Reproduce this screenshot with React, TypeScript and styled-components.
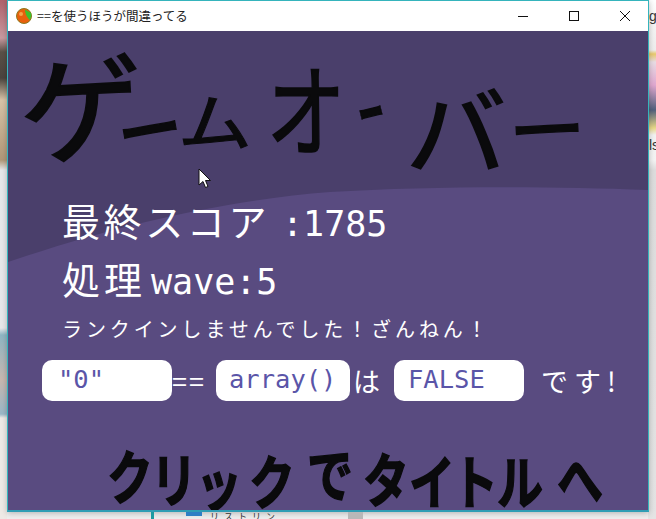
import React from "react";
import styled, { createGlobalStyle } from "styled-components";

const Global = createGlobalStyle`
  html, body { margin: 0; padding: 0; background: #eeeeee; }
  #root { width: 656px; height: 519px; overflow: hidden; }
`;

const CJK = `"Noto Sans CJK JP", "Noto Sans", sans-serif`;
const MONO = `"DejaVu Sans Mono", monospace`;

const Desktop = styled.div`
  position: relative;
  width: 656px;
  height: 519px;
  overflow: hidden;
  display: flex;
  flex-direction: column;
  background-color: #eeeeee;
  background-image:
    linear-gradient(180deg, #b0626c 0, #c99aa0 38px, #5a5148 52px, #4a443e 78px, #d8c4a8 100px, #b09878 160px, #e6e8ea 170px, #e8e8ea 328px, #8fb6c4 335px, #c8b8b0 380px, #9ab8c8 414px, #eeeae6 418px),
    linear-gradient(180deg, #ffffff 0, #f4f4f4 26px, #eeeeee 50px, #e9c96c 54px, #e8dce4 62px, #e0a8d0 85px, #50607c 110px, #e8d888 128px, #f2f2f2 135px, #f4f4f4 160px, #dddddd 170px, #e4e4e4 519px);
  background-size: 7px 519px, 8px 519px;
  background-position: left top, right top;
  background-repeat: no-repeat;
`;

const Window = styled.main`
  width: 642px;
  height: 512px;
  margin-left: 7px;
  flex: none;
  box-sizing: border-box;
  display: flex;
  flex-direction: column;
  border: 1px solid #35b4bc;
  border-bottom: 2px solid #2f9db4;
  box-shadow: 0 1px 6px rgba(0, 0, 0, 0.25);
`;

const TitleBar = styled.header`
  height: 30px;
  flex: none;
  display: flex;
  align-items: center;
  padding-left: 8px;
  background: #ffffff;
  font: 12.5px/1 ${CJK};
  color: #222222;
  gap: 5px;
`;

const TitleText = styled.span`
  flex: 1;
`;

const Control = styled.div`
  width: 46px;
  height: 30px;
  display: flex;
  align-items: center;
  justify-content: center;
`;

const Game = styled.section`
  position: relative;
  flex: 1;
  min-height: 0;
  overflow: hidden;
  background: #594b80;
  display: flex;
  flex-direction: column;
  color: #ffffff;
  font-family: ${CJK};
`;

const Backdrop = styled.svg`
  position: absolute;
  inset: 0;
  width: 100%;
  height: 100%;
`;

const Cursor = styled.svg`
  position: absolute;
  left: 190px;
  top: 137px;
`;

const Scribble = styled.div<{ $size: number; $height: number; $stroke: number; $weight: number }>`
  position: relative;
  display: flex;
  height: ${(p) => p.$height}px;
  font-size: ${(p) => p.$size}px;
  font-weight: ${(p) => p.$weight};
  line-height: 1;
  color: #0a0a0c;
  -webkit-text-stroke: ${(p) => p.$stroke}px #0a0a0c;
`;

const Glyph = styled.span<{ $w: number; $top: number; $left?: number; $rot?: number; $sx?: number; $sy?: number }>`
  display: flex;
  justify-content: center;
  flex: none;
  align-self: flex-start;
  width: ${(p) => p.$w}px;
  margin-top: ${(p) => p.$top}px;
  margin-left: ${(p) => p.$left ?? 0}px;
  white-space: nowrap;
  transform: rotate(${(p) => p.$rot ?? 0}deg) scale(${(p) => p.$sx ?? 1}, ${(p) => p.$sy ?? 1});
`;

const TitleRow = styled(Scribble)`
  padding-left: 8px;
`;

const FooterRow = styled(Scribble)`
  padding-left: 98px;
  margin-top: 40px;
`;

const Line = styled.div<{ $size: number; $space: number; $height: number; $top: number; $weight: number }>`
  position: relative;
  padding-left: 54px;
  margin-top: ${(p) => p.$top}px;
  font-size: ${(p) => p.$size}px;
  letter-spacing: ${(p) => p.$space}px;
  line-height: ${(p) => p.$height}px;
  height: ${(p) => p.$height}px;
  font-weight: ${(p) => p.$weight};
  white-space: nowrap;
`;

const MonoRun = styled.span<{ $left: number }>`
  font-family: ${MONO};
  font-size: 35px;
  letter-spacing: 0;
  margin-left: ${(p) => p.$left}px;
`;

const Sentence = styled.div`
  position: relative;
  display: flex;
  align-items: center;
  height: 42px;
  margin-top: 16px;
  padding-left: 34px;
  font-size: 27px;
  font-weight: 400;
  white-space: nowrap;
`;

const Tag = styled.span<{ $w: number; $pad: number }>`
  box-sizing: border-box;
  width: ${(p) => p.$w}px;
  height: 41px;
  flex: none;
  display: flex;
  align-items: center;
  padding-left: ${(p) => p.$pad}px;
  background: #ffffff;
  border-radius: 10px;
  color: #5a55a8;
  font: 25.5px/1 ${MONO};
`;

const Word = styled.span<{ $w: number; $left?: number; $space?: number }>`
  flex: none;
  width: ${(p) => p.$w}px;
  margin-left: ${(p) => p.$left ?? 0}px;
  letter-spacing: ${(p) => p.$space ?? 0}px;
`;

const BottomStrip = styled.div`
  flex: 1;
  position: relative;
  display: flex;
  align-items: flex-start;
  overflow: hidden;
  padding-left: 151px;
`;

const TealBar = styled.span`
  width: 3px;
  height: 7px;
  background: #1d9aa0;
  flex: none;
`;

const Pane = styled.div`
  display: flex;
  align-items: flex-start;
  gap: 8px;
  height: 7px;
  margin-left: 32px;
  width: 162px;
  font: 9px/1 ${CJK};
  color: #333333;
`;

const Chip = styled.span`
  width: 16px;
  height: 4px;
  background: #2f7fc4;
  flex: none;
`;

const PaneText = styled.span`
  letter-spacing: 5px;
  white-space: nowrap;
`;

const Scrollbar = styled.span`
  width: 15px;
  height: 7px;
  background: #b8b8b8;
  flex: none;
`;

const Peek = styled.span<{ $top: number }>`
  position: absolute;
  left: 649px;
  top: ${(p) => p.$top}px;
  font: 14px/1 "Liberation Sans", sans-serif;
  color: #333333;
`;

const title = [
  { c: "ゲ", w: 102, left: 14, top: 40, rot: -3, sx: 2.0, sy: 1.9 },
  { c: "ー", w: 62, left: -14, top: 63, rot: -10, sx: 1.06, sy: 1.42 },
  { c: "ム", w: 70, top: 57, sx: 1.2, sy: 1.0 },
  { c: "オ", w: 72, left: 20, top: 43, sx: 1.28, sy: 1.63 },
  { c: "ー", w: 48, left: 4, top: 46, rot: -14, sx: 0.43, sy: 1.42 },
  { c: "バ", w: 88, left: 18, top: 64, sx: 1.63, sy: 1.56 },
  { c: "ー", w: 70, left: 12, top: 63, rot: -3, sx: 1.25, sy: 1.28 },
];

const footer = [
  { c: "ク", w: 48, top: 13 },
  { c: "リ", w: 40, top: 16 },
  { c: "ッ", w: 50, top: 20 },
  { c: "ク", w: 56, top: 18 },
  { c: "で", w: 60, top: 11 },
  { c: "タ", w: 52, top: 16 },
  { c: "イ", w: 40, top: 18 },
  { c: "ト", w: 46, top: 18 },
  { c: "ル", w: 44, top: 18 },
  { c: "へ", w: 76, top: 16 },
];

const notice = "ランクインしませんでした\uFF01ざんねん\uFF01";

export default function App() {
  return (
    <Desktop>
      <Global />
      <Window>
        <TitleBar>
          <svg width="16" height="16" viewBox="0 0 16 16">
            <circle cx="8" cy="8" r="7.5" fill="#e8600c" stroke="#8a7a20" strokeWidth="1" />
            <path d="M9 1.5 L15 5 Q16 9 13.5 12 Q9 7 9 1.5Z" fill="#3fc02c" />
            <circle cx="5" cy="6" r="2" fill="#f5a24a" />
          </svg>
          <TitleText>==を使うほうが間違ってる</TitleText>
          <Control>
            <svg width="12" height="12" viewBox="0 0 12 12"><path d="M1 6.5H11" stroke="#111" strokeWidth="1" /></svg>
          </Control>
          <Control>
            <svg width="12" height="12" viewBox="0 0 12 12"><rect x="1.5" y="1.5" width="9" height="9" fill="none" stroke="#111" /></svg>
          </Control>
          <Control>
            <svg width="12" height="12" viewBox="0 0 12 12"><path d="M1 1L11 11M11 1L1 11" stroke="#111" strokeWidth="1" /></svg>
          </Control>
        </TitleBar>
        <Game>
          <Backdrop viewBox="0 0 640 479" preserveAspectRatio="none" aria-hidden="true">
            <path d="M0 0H640V159C540 155 420 155 322 161C230 168 120 190 0 231Z" fill="#4a3f6b" />
          </Backdrop>
          <Cursor width="14" height="22" viewBox="0 0 14 22" aria-hidden="true">
            <path d="M1 1V17L5 13.5L7.5 19.5L10 18.5L7.5 12.5H12.5Z" fill="#fff" stroke="#111" strokeWidth="1" />
          </Cursor>
          <TitleRow $size={62} $height={158} $stroke={1} $weight={400}>
            {title.map((g, i) => (
              <Glyph key={i} $w={g.w} $left={g.left} $top={g.top} $rot={g.rot} $sx={g.sx} $sy={g.sy}>{g.c}</Glyph>
            ))}
          </TitleRow>
          <Line $size={38} $space={3.6} $height={44} $top={9} $weight={400}>最終スコア<MonoRun $left={12}>:1785</MonoRun></Line>
          <Line $size={38} $space={4} $height={44} $top={14} $weight={400}>処理<MonoRun $left={5}>wave:5</MonoRun></Line>
          <Line $size={20} $space={3.9} $height={28} $top={15} $weight={400}>{notice}</Line>
          <Sentence>
            <Tag $w={130} $pad={16}>"0"</Tag>
            <Word $w={44} $space={2}>==</Word>
            <Tag $w={134} $pad={13}>array()</Tag>
            <Word $w={41} $left={3}>は</Word>
            <Tag $w={130} $pad={14}>FALSE</Tag>
            <Word $w={80} $left={17} $space={6}>です!</Word>
          </Sentence>
          <FooterRow $size={40} $height={69} $stroke={1} $weight={700}>
            {footer.map((g, i) => (
              <Glyph key={i} $w={g.w} $top={g.top} $sx={1.15} $sy={1.45}>{g.c}</Glyph>
            ))}
          </FooterRow>
        </Game>
      </Window>
      <BottomStrip>
        <TealBar />
        <Pane>
          <Chip />
          <PaneText>リストリン</PaneText>
        </Pane>
        <Scrollbar />
      </BottomStrip>
      <Peek $top={9}>ge</Peek>
      <Peek $top={138}>ls</Peek>
    </Desktop>
  );
}
